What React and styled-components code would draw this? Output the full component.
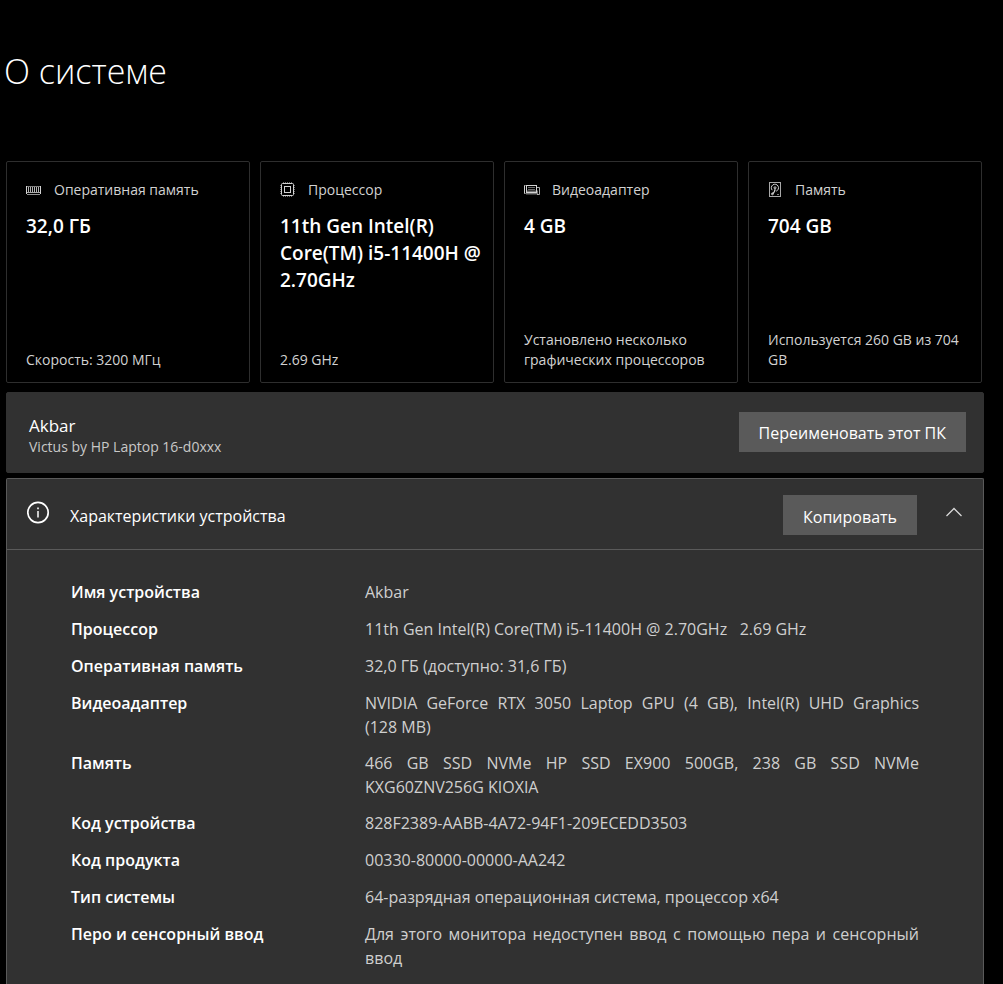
// src/App.jsx

import React from 'react';
import styled, { createGlobalStyle } from 'styled-components';

const GlobalStyle = createGlobalStyle`
  *, *::before, *::after {
    box-sizing: border-box;
  }

  body {
    margin: 0;
    background: #000000;
    color: #ffffff;
    font-family: 'Segoe UI', 'Open Sans', 'Noto Sans', sans-serif;
  }
`;

const Page = styled.main`
  display: flex;
  flex-direction: column;
  min-height: 100vh;
  padding: 0 19px 0 4px;
`;

const Title = styled.h1`
  margin: 0;
  padding: 47px 0 66px;
  font-size: 34px;
  font-weight: 300;
  line-height: 48px;
`;

const Cards = styled.section`
  display: grid;
  grid-template-columns: 244fr 234fr 234fr 234fr;
  gap: 10px;
  margin: 0 2px 9px;
`;

const Card = styled.article`
  display: flex;
  flex-direction: column;
  min-width: 0;
  min-height: 222px;
  padding: 18px 8px 12px 19px;
  border: 1px solid #2e2e2e;
  border-radius: 2px;
`;

const CardHeader = styled.div`
  display: flex;
  align-items: center;
  gap: 12px;
  color: #d2d2d2;

  & > svg {
    flex: none;
  }
`;

const CardLabel = styled.h2`
  margin: 0;
  font-size: 14px;
  font-weight: 400;
  line-height: 20px;
`;

const CardValue = styled.p`
  margin: 13px 0 0;
  font-size: 19px;
  font-weight: 600;
  line-height: 27px;
`;

const CardNote = styled.p`
  margin: auto 0 0;
  color: #d2d2d2;
  font-size: 14px;
  line-height: 20px;
`;

const Panel = styled.section`
  margin-left: 2px;
  background: #313131;
  border: 1px solid ${({ $outlined }) => ($outlined ? '#5a5a5a' : '#313131')};
  border-radius: 2px;
`;

const DevicePanel = styled(Panel)`
  display: flex;
  align-items: center;
  justify-content: space-between;
  min-height: 81px;
  margin-bottom: 5px;
  padding: 0 17px 2px 22px;
`;

const DeviceInfo = styled.div`
  padding-top: 8px;
`;

const DeviceName = styled.h2`
  margin: 0;
  font-size: 17px;
  font-weight: 400;
  line-height: 22px;
`;

const DeviceModel = styled.p`
  margin: 0;
  color: #c8c8c8;
  font-size: 14px;
  line-height: 20px;
`;

const Button = styled.button`
  height: 40px;
  padding: 3px 20px 0;
  border: 0;
  background: #5a5a5a;
  color: #ffffff;
  font-family: inherit;
  font-size: 16px;
  line-height: 24px;
  white-space: nowrap;
`;

const SpecsPanel = styled(Panel)`
  flex: 1;
  border-bottom: 0;
  border-radius: 2px 2px 0 0;
`;

const SpecsHeader = styled.header`
  display: flex;
  align-items: center;
  min-height: 71px;
  padding: 2px 20px 0;
  border-bottom: 1px solid #5a5a5a;

  & svg {
    flex: none;
    margin-bottom: 5px;
  }
`;

const SpecsTitle = styled.h2`
  flex: 1;
  margin: 0;
  padding: 2px 0 0 20px;
  font-size: 16px;
  font-weight: 400;
  line-height: 24px;
`;

const ToggleButton = styled.button`
  display: flex;
  margin-left: 28px;
  padding: 0;
  border: 0;
  background: none;
  color: #d8d8d8;
`;

const SpecsTable = styled.table`
  width: calc(100% - 128px);
  margin: 30px 64px 0;
  border-collapse: collapse;
  table-layout: fixed;
  font-size: 16px;
  line-height: 24px;
`;

const SpecName = styled.th`
  width: 294px;
  height: 37px;
  padding: 0 0 12px;
  font-weight: 600;
  text-align: left;
  vertical-align: top;
`;

const SpecValue = styled.td`
  height: 37px;
  padding: 0 0 12px;
  color: #cfcfcf;
  text-align: justify;
  vertical-align: top;
`;

const MemoryIcon = () => (
  <svg width="16" height="16" viewBox="0 0 16 16" fill="none" stroke="currentColor" aria-hidden="true">
    <path d="M0.5 4V12M14.5 4V12" />
    <path d="M0 4.5H15" opacity="0.6" />
    <path d="M2.5 5V10M4.5 5V10M6.5 5V10M8.5 5V10M10.5 5V10M12.5 5V10" opacity="0.85" />
    <path d="M1 10.5H14" opacity="0.8" />
    <path d="M1 12.5H14" opacity="0.7" />
  </svg>
);

const ProcessorIcon = () => (
  <svg width="16" height="16" viewBox="0 0 16 16" fill="none" stroke="currentColor" aria-hidden="true">
    <rect x="1.5" y="1.5" width="12" height="12" rx="1" />
    <rect x="4.5" y="4.5" width="6" height="6" />
    <path d="M3 0.5H13M3 14.5H13M0.5 3V13M14.5 3V13" strokeDasharray="1 1" opacity="0.5" />
  </svg>
);

const GraphicsIcon = () => (
  <svg width="16" height="16" viewBox="0 0 16 16" fill="none" stroke="currentColor" aria-hidden="true">
    <path d="M1.5 3.5H0.5V11.5H1.5" />
    <rect x="2.5" y="3.5" width="10" height="7" />
    <path d="M4 5.5H11M4 7.5H11" opacity="0.5" />
    <path d="M2 9.5H14M2 11.5H14" strokeWidth="2" opacity="0.55" />
    <path d="M13 5.5H15.5V12.5H13" opacity="0.8" />
  </svg>
);

const StorageIcon = () => (
  <svg width="15" height="16" viewBox="0 0 15 16" fill="none" stroke="currentColor" aria-hidden="true">
    <rect x="1.5" y="0.5" width="11" height="14" opacity="0.8" />
    <path d="M4.2 8.2A3.6 3.6 0 1 1 8.2 9.2" />
    <circle cx="7" cy="5.8" r="1" />
    <path d="M7.2 7.2L6.3 9.8L4.5 12" strokeWidth="1.3" />
    <circle cx="4.4" cy="11.9" r="0.9" />
    <path d="M9 12.5H11" opacity="0.6" />
  </svg>
);

const InfoIcon = () => (
  <svg width="23" height="23" viewBox="0 0 23 23" fill="none" stroke="currentColor" aria-hidden="true">
    <circle cx="11" cy="11.5" r="10.2" strokeWidth="1.7" />
    <path d="M11 10V16.5" strokeWidth="1.5" />
    <path d="M11 6.5V8.2" strokeWidth="1.6" />
  </svg>
);

const ChevronUpIcon = () => (
  <svg width="18" height="16" viewBox="0 0 18 16" fill="none" stroke="currentColor" aria-hidden="true">
    <path d="M1.5 11L9 3.5L16.5 11" strokeWidth="1.3" />
  </svg>
);

const cards = [
  { label: 'Оперативная память', value: '32,0 ГБ', note: 'Скорость: 3200 МГц', Icon: MemoryIcon },
  {
    label: 'Процессор',
    value: '11th Gen Intel(R) Core(TM) i5-11400H @ 2.70GHz',
    note: '2.69 GHz',
    Icon: ProcessorIcon,
  },
  {
    label: 'Видеоадаптер',
    value: '4 GB',
    note: 'Установлено несколько графических процессоров',
    Icon: GraphicsIcon,
  },
  { label: 'Память', value: '704 GB', note: 'Используется 260 GB из 704 GB', Icon: StorageIcon },
];

const specs = [
  ['Имя устройства', 'Akbar'],
  ['Процессор', '11th Gen Intel(R) Core(TM) i5-11400H @ 2.70GHz\u00a0\u00a0 2.69 GHz'],
  ['Оперативная память', '32,0 ГБ (доступно: 31,6 ГБ)'],
  ['Видеоадаптер', 'NVIDIA GeForce RTX 3050 Laptop GPU (4 GB), Intel(R) UHD Graphics (128\u00a0MB)'],
  ['Память', '466 GB SSD NVMe HP SSD EX900 500GB, 238 GB SSD NVMe KXG60ZNV256G KIOXIA'],
  ['Код устройства', '828F2389-AABB-4A72-94F1-209ECEDD3503'],
  ['Код продукта', '00330-80000-00000-AA242'],
  ['Тип системы', '64-разрядная операционная система, процессор x64'],
  ['Перо и сенсорный ввод', 'Для этого монитора недоступен ввод с помощью пера и сенсорный ввод'],
];

const App = () => (
  <>
    <GlobalStyle />
    <Page>
      <Title>О системе</Title>
      <Cards>
        {cards.map(({ label, value, note, Icon }) => (
          <Card key={label}>
            <CardHeader>
              <Icon />
              <CardLabel>{label}</CardLabel>
            </CardHeader>
            <CardValue>{value}</CardValue>
            <CardNote>{note}</CardNote>
          </Card>
        ))}
      </Cards>
      <DevicePanel>
        <DeviceInfo>
          <DeviceName>Akbar</DeviceName>
          <DeviceModel>Victus by HP Laptop 16-d0xxx</DeviceModel>
        </DeviceInfo>
        <Button type="button">Переименовать этот ПК</Button>
      </DevicePanel>
      <SpecsPanel $outlined>
        <SpecsHeader>
          <InfoIcon />
          <SpecsTitle id="specs-title">Характеристики устройства</SpecsTitle>
          <Button type="button">Копировать</Button>
          <ToggleButton type="button" aria-expanded="true" aria-labelledby="specs-title">
            <ChevronUpIcon />
          </ToggleButton>
        </SpecsHeader>
        <SpecsTable aria-labelledby="specs-title">
          <tbody>
            {specs.map(([name, value]) => (
              <tr key={name}>
                <SpecName scope="row">{name}</SpecName>
                <SpecValue>{value}</SpecValue>
              </tr>
            ))}
          </tbody>
        </SpecsTable>
      </SpecsPanel>
    </Page>
  </>
);

export default App;
